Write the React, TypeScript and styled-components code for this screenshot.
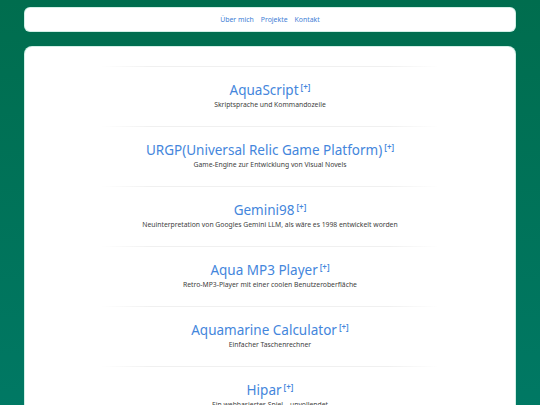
import React from 'react';
import styled, { createGlobalStyle } from 'styled-components';

const GlobalStyle = createGlobalStyle`
  html, body {
    margin: 0;
    padding: 0;
  }

  body {
    min-height: 100vh;
    background: linear-gradient(to bottom, #006d4e, #007a67);
    font-family: "Noto Sans", "Open Sans", sans-serif;
    overflow: hidden;
  }
`;

const Page = styled.div`
  display: flex;
  flex-direction: column;
  gap: 14px;
  padding: 7px 24px 0;
`;

const NavCard = styled.nav`
  display: flex;
  justify-content: center;
  align-items: center;
  gap: 7px;
  height: 25px;
  background: #ffffff;
  border-radius: 6px;
  border: 1px solid rgba(180, 230, 215, 0.6);
  box-sizing: border-box;
`;

const NavLink = styled.a`
  font-size: 6.9px;
  color: #3f7fd6;
  text-decoration: none;
`;

const MainCard = styled.main`
  background: #ffffff;
  border-radius: 8px 8px 0 0;
  border: 1px solid rgba(180, 230, 215, 0.6);
  border-bottom: none;
  box-sizing: border-box;
  padding: 19px 0 40px;
  display: flex;
  flex-direction: column;
  align-items: center;
`;

const Divider = styled.div`
  width: 340px;
  height: 1px;
  background: linear-gradient(to right, rgba(0, 0, 0, 0), rgba(0, 0, 0, 0.06) 15%, rgba(0, 0, 0, 0.06) 85%, rgba(0, 0, 0, 0));
`;

const Project = styled.section`
  display: flex;
  flex-direction: column;
  align-items: center;
  padding: 15px 0 15px;
`;

const Title = styled.a`
  font-size: 13.5px;
  line-height: 17px;
  color: #4486dc;
  text-decoration: none;
`;

const More = styled.sup`
  font-size: 8px;
  font-weight: 600;
  margin-left: 2px;
  vertical-align: 5px;
  line-height: 0;
`;

const Description = styled.p`
  margin: 0;
  font-size: 6.8px;
  line-height: 12px;
  color: #404040;
`;

const projects = [
  { name: 'AquaScript', text: 'Skriptsprache und Kommandozeile' },
  { name: 'URGP(Universal Relic Game Platform)', text: 'Game-Engine zur Entwicklung von Visual Novels' },
  { name: 'Gemini98', text: 'Neuinterpretation von Googles Gemini LLM, als wäre es 1998 entwickelt worden' },
  { name: 'Aqua MP3 Player', text: 'Retro-MP3-Player mit einer coolen Benutzeroberfläche' },
  { name: 'Aquamarine Calculator', text: 'Einfacher Taschenrechner' },
  { name: 'Hipar', text: 'Ein webbasiertes Spiel – unvollendet' },
];

const App = () => {
  return (
    <>
      <GlobalStyle />
      <Page>
        <NavCard>
          <NavLink href="#about">Über mich</NavLink>
          <NavLink href="#projects">Projekte</NavLink>
          <NavLink href="#contact">Kontakt</NavLink>
        </NavCard>
        <MainCard>
          {projects.map((project, index) => (
            <React.Fragment key={index}>
              <Divider />
              <Project>
                <Title href="#">
                  {project.name}
                  <More>[+]</More>
                </Title>
                <Description>{project.text}</Description>
              </Project>
            </React.Fragment>
          ))}
        </MainCard>
      </Page>
    </>
  );
};

export default App;
